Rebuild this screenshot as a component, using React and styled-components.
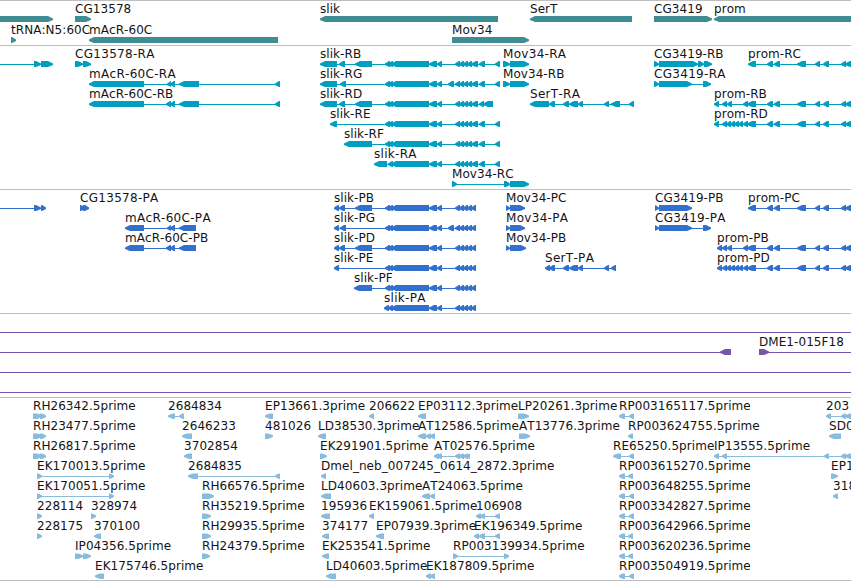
import React from 'react'
import { styled, createGlobalStyle } from 'styled-components'

const GlobalStyle = createGlobalStyle`
  body {
    margin: 0;
    background: #fff;
  }
`;
const Browser = styled.main`
  display: flex;
  flex-direction: column;
  width: 851px;
  height: 581px;
  background: #fff;
  border-bottom: 1px solid #bebebe;
  box-sizing: border-box;
  overflow: hidden;
`;
const Track = styled.section`
  flex: none;
  padding: 1px 0 ${({ $bottom }) => $bottom}px;
  border-top: 1px solid #bebebe;
  color: ${({ $color }) => $color};
`;
const Lane = styled.div`
  display: grid;
  grid-template-columns: 851px;
  height: ${({ $height }) => $height}px;
`;
const FeatureBox = styled.div`
  grid-area: 1 / 1;
  display: flex;
  flex-direction: column;
  width: 0;
  margin-left: ${({ $start }) => $start}px;
`;
const Label = styled.span`
  height: 14px;
  color: #141414;
  font: 12px/14px 'DejaVu Sans', sans-serif;
  font-kerning: none;
  letter-spacing: ${({ $wide }) => ($wide ? '0.3px' : '0.06px')};
  white-space: nowrap;
`;
const Glyph = styled.svg`
  display: block;
  flex: none;
  fill: currentColor;
`;

// an exon block with its pointed end on the strand side
function exonPoints([from, to], strand, top) {
  const width = to - from;
  const head = width > 6 ? 5 : Math.min(4, width);
  const dir = strand === '+' ? 1 : -1;
  const tip = dir > 0 ? to : from;
  const tail = dir > 0 ? from : to;
  const neck = tip - dir * head;
  const mid = tip - dir * head * 0.5;
  return `${tail},${top} ${neck},${top} ${mid},1.2 ${tip},2.4 ${tip},4.1 ${mid},5.1 ${neck},6 ${tail},6`;
}

function Feature({ name, strand, exons, span, top }) {
  const [start, end] = span || [exons[0][0], exons[exons.length - 1][1]];
  return (
    <FeatureBox $start={start}>
      <Label $wide={/-[RP]A$/.test(name)}>{name}</Label>
      <Glyph width={end - start} height="6" viewBox={`${start} 0 ${end - start} 6`}>
        <rect x={start} y="3" width={end - start} height="1" shapeRendering="crispEdges" />
        {exons.map((exon, i) => (
          <polygon key={i} points={exonPoints(exon, strand, top)} />
        ))}
      </Glyph>
    </FeatureBox>
  )
}

// name, strand, exons, optional drawn span when it runs past the view
const f = (name, strand, exons, span) => ({ name, strand, exons, span });

const SLIK_MID = [[385, 390], [388, 393], [391, 429], [429, 437], [437, 442]];
const SLIK_END = [[455, 460], [459, 464], [463, 468], [467, 472]];
const SLIK_R = [...SLIK_END, [471, 478], [479, 485], [495, 500]];
const SLIK_P = [...SLIK_END, [471, 476]];
const SERT_MID = [[549, 555], [563, 569], [569, 578], [578, 583], [604, 609]];
const PROM_END = [[767, 773], [774, 780], [797, 806], [815, 820], [823, 829], [841, 846], [845, 852]];
const PROM_B = [[722, 727], [727, 732], [743, 748], [747, 756], ...PROM_END];
const PROM_D = [[722, 727], [726, 731], [730, 735], [734, 739], [738, 743], [743, 748], [747, 756], ...PROM_END];
const MACR_A = [[167, 171], [170, 175]];
const MACR_B = [[166, 171], [170, 175]];
const RP = [[619, 625], [629, 634]];
const RP_SHORT = [[619, 625], [628, 633]];
const RH = [[33, 42], [40, 46]];

const genes = [
  [
    f('', '+', [[0, 53]]),
    f('CG13578', '+', [[75, 91]]),
    f('slik', '-', [[320, 498]]),
    f('SerT', '-', [[530, 632]]),
    f('CG3419', '+', [[654, 712]]),
    f('prom', '-', [[714, 852]]),
  ],
  [
    f('tRNA:N5:60C', '+', [[11, 16]]),
    f('mAcR-60C', '-', [[89, 278]]),
    f('Mov34', '+', [[452, 529]]),
  ],
];

const transcripts = [
  [
    f('', '+', [[34, 41], [41, 53]], [0, 53]),
    f('CG13578-RA', '+', [[75, 83], [83, 91]]),
    f('slik-RB', '-', [[320, 337], [339, 345], [355, 372], ...SLIK_MID, ...SLIK_R]),
    f('Mov34-RA', '+', [[503, 510], [510, 529]]),
    f('CG3419-RB', '+', [[654, 659], [659, 698], [698, 704], [704, 712]]),
    f('prom-RC', '-', [[748, 756], ...PROM_END]),
  ],
  [
    f('mAcR-60C-RA', '-', [[89, 144], ...MACR_A, [179, 199], [275, 280]]),
    f('slik-RG', '-', [[320, 337], [340, 346], ...SLIK_MID, [448, 454], ...SLIK_R]),
    f('Mov34-RB', '+', [[503, 510], [510, 529]]),
    f('CG3419-RA', '+', [[654, 659], [659, 692], [703, 711]]),
  ],
  [
    f('mAcR-60C-RB', '-', [[89, 144], ...MACR_B, [179, 199], [275, 280]]),
    f('slik-RD', '-', [[320, 337], [339, 345], [355, 372], ...SLIK_MID, ...SLIK_END, [471, 478], [479, 484], [483, 493]]),
    f('SerT-RA', '-', [[530, 549], ...SERT_MID, [611, 620], [629, 634]]),
    f('prom-RB', '-', [[714, 719], ...PROM_B]),
  ],
  [
    f('slik-RE', '-', [[330, 337], ...SLIK_MID, ...SLIK_R]),
    f('prom-RD', '-', [[714, 719], ...PROM_D]),
  ],
  [f('slik-RF', '-', [[344, 372], ...SLIK_MID, ...SLIK_R])],
  [f('slik-RA', '-', [[374, 387], ...SLIK_MID.slice(1), ...SLIK_R])],
  [f('Mov34-RC', '+', [[452, 457], [504, 510], [510, 529]])],
];

const proteins = [
  [
    f('', '+', [[34, 41], [41, 46]], [0, 46]),
    f('CG13578-PA', '+', [[80, 85], [83, 89]]),
    f('slik-PB', '-', [[334, 339], [339, 345], [355, 372], ...SLIK_MID, ...SLIK_P]),
    f('Mov34-PC', '+', [[506, 510], [510, 525]]),
    f('CG3419-PB', '+', [[655, 659], [659, 692]]),
    f('prom-PC', '-', [[748, 756], ...PROM_END]),
  ],
  [
    f('mAcR-60C-PA', '-', [[125, 144], ...MACR_A, [179, 196]]),
    f('slik-PG', '-', [[334, 339], [340, 346], ...SLIK_MID, [448, 454], ...SLIK_P]),
    f('Mov34-PA', '+', [[506, 510], [510, 525]]),
    f('CG3419-PA', '+', [[655, 659], [659, 692], [703, 711]]),
  ],
  [
    f('mAcR-60C-PB', '-', [[125, 144], ...MACR_B, [179, 196]]),
    f('slik-PD', '-', [[334, 339], [339, 345], [355, 372], ...SLIK_MID, ...SLIK_P]),
    f('Mov34-PB', '+', [[506, 510], [510, 526]]),
    f('prom-PB', '-', [[717, 722], ...PROM_B]),
  ],
  [
    f('slik-PE', '-', [[334, 339], ...SLIK_MID, ...SLIK_P]),
    f('SerT-PA', '-', [[545, 550], ...SERT_MID, [611, 616]]),
    f('prom-PD', '-', [[717, 722], ...PROM_D]),
  ],
  [f('slik-PF', '-', [[354, 372], ...SLIK_MID, ...SLIK_P])],
  [f('slik-PA', '-', [[384, 389], ...SLIK_MID.slice(1), ...SLIK_P])],
];

const clones = [
  [f('', '+', [], [0, 851])],
  [
    f('', '-', [[720, 731]], [0, 731]),
    f('DME1-015F18', '+', [[759, 769]], [759, 851]),
  ],
  [f('', '+', [], [0, 851])],
  [f('', '+', [], [0, 851])],
];

const ests = [
  [
    f('RH26342.5prime', '+', RH),
    f('2684834', '-', [[168, 175], [179, 184]]),
    f('EP13661.3prime', '-', [[265, 273]]),
    f('206622', '-', [[369, 374]]),
    f('EP03112.3prime', '-', [[418, 426]]),
    f('LP20261.3prime', '+', [[518, 529]]),
    f('RP003165117.5prime', '-', RP),
    f('203', '-', [[826, 831], [841, 846], [845, 852]]),
  ],
  [
    f('RH23477.5prime', '+', RH),
    f('2646233', '-', [[182, 192]]),
    f('481026', '+', [[265, 273]]),
    f('LD38530.3prime', '-', [[318, 326]]),
    f('AT12586.5prime', '-', [[418, 426], [426, 431], [430, 435]]),
    f('AT13776.3prime', '+', [[519, 530]]),
    f('RP003624755.5prime', '-', [[628, 633]]),
    f('SD0', '-', [[829, 841]]),
  ],
  [
    f('RH26817.5prime', '+', RH),
    f('3702854', '-', [[184, 192]]),
    f('EK291901.5prime', '+', [[320, 327]]),
    f('AT02576.5prime', '-', [[434, 439], [437, 442], [455, 460], [459, 464], [463, 468], [466, 470]]),
    f('RE65250.5prime', '-', [[613, 621], [629, 634]]),
    f('IP13555.5prime', '-', [[714, 719], [722, 727], [824, 829], [841, 846], [845, 852]]),
  ],
  [
    f('EK170013.5prime', '+', [[37, 42], [109, 114]]),
    f('2684835', '-', [[188, 198], [275, 280]]),
    f('Dmel_neb_007245_0614_2872.3prime', '-', [[321, 326]]),
    f('RP003615270.5prime', '-', RP_SHORT),
    f('EP1', '+', [[831, 838]]),
  ],
  [
    f('EK170051.5prime', '+', [[37, 42], [109, 114]]),
    f('RH66576.5prime', '+', [[202, 214]]),
    f('LD40603.3prime', '-', [[321, 331]]),
    f('AT24063.5prime', '-', [[422, 430], [430, 435]]),
    f('RP003648255.5prime', '-', RP),
    f('318', '-', [[833, 838]]),
  ],
  [
    f('228114', '+', [[37, 42]]),
    f('328974', '+', [[91, 96]]),
    f('RH35219.5prime', '+', [[202, 211]]),
    f('195936', '-', [[321, 330]]),
    f('EK159061.5prime', '-', [[369, 374]]),
    f('106908', '-', [[476, 481], [480, 485], [495, 500]]),
    f('RP003342827.5prime', '-', RP),
  ],
  [
    f('228175', '+', [[37, 42]]),
    f('370100', '-', [[94, 101]]),
    f('RH29935.5prime', '+', [[202, 211]]),
    f('374177', '-', [[322, 329]]),
    f('EP07939.3prime', '-', [[376, 384]]),
    f('EK196349.5prime', '-', [[474, 479], [479, 485], [495, 500]]),
    f('RP003642966.5prime', '-', RP_SHORT),
  ],
  [
    f('IP04356.5prime', '+', [[75, 83], [83, 91]]),
    f('RH24379.5prime', '+', [[202, 210]]),
    f('EK253541.5prime', '-', [[322, 329]]),
    f('RP003139934.5prime', '+', [[453, 458], [504, 509]]),
    f('RP003620236.5prime', '-', RP_SHORT),
  ],
  [
    f('EK175746.5prime', '-', [[95, 104]]),
    f('LD40603.5prime', '-', [[326, 336]]),
    f('EK187809.5prime', '-', [[426, 431], [430, 435]]),
    f('RP003504919.5prime', '-', RP),
  ],
];

const tracks = [
  { id: 'genes', color: '#3f8c93', lanes: genes, laneHeight: 21, bottom: 1 },
  { id: 'transcripts', color: '#009fbf', lanes: transcripts },
  { id: 'proteins', color: '#336fcc', lanes: proteins },
  { id: 'clones', color: '#7755aa', lanes: clones },
  { id: 'ests', color: '#88bbdd', lanes: ests, bottom: 1, top: 0.6 },
];

function App() {
  return (
    <Browser>
      <GlobalStyle />
      {tracks.map(({ id, color, lanes, laneHeight = 20, bottom = 2, top = 0 }) => (
        <Track key={id} $color={color} $bottom={bottom}>
          {lanes.map((features, i) => (
            <Lane key={i} $height={laneHeight}>
              {features.map((feature, j) => (
                <Feature key={j} top={top} {...feature} />
              ))}
            </Lane>
          ))}
        </Track>
      ))}
    </Browser>
  )
}

export default App
